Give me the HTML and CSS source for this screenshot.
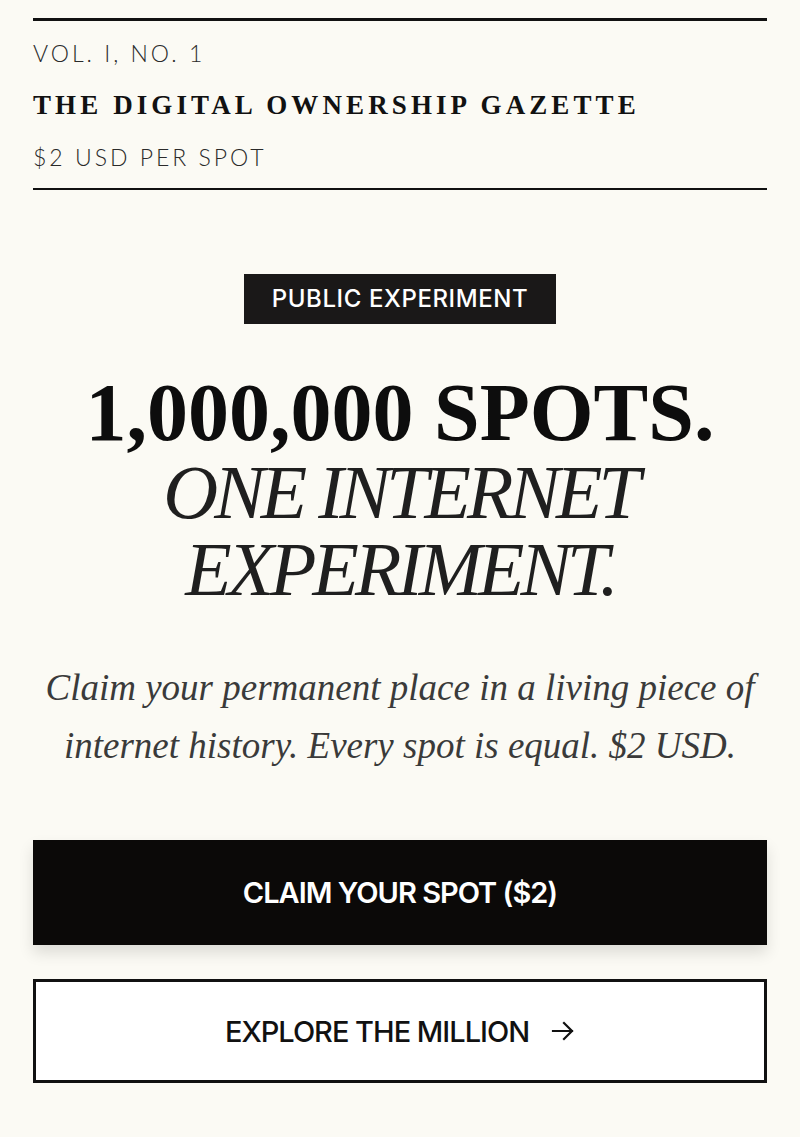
FILE: index.html
```html
<!DOCTYPE html>
<html lang="en">
<head>
<meta charset="utf-8">
<title>The Digital Ownership Gazette</title>
<link rel="stylesheet" href="styles.css">
</head>
<body>
<div class="page">
  <header class="masthead">
    <div class="meta">VOL. I, NO. 1</div>
    <div class="title">THE DIGITAL OWNERSHIP GAZETTE</div>
    <div class="meta">$2 USD PER SPOT</div>
  </header>
  <main class="hero">
    <div class="badge">PUBLIC EXPERIMENT</div>
    <h1 class="headline">
      <span class="line-bold">1,000,000 SPOTS.</span>
      <span class="line-italic">ONE INTERNET</span>
      <span class="line-italic">EXPERIMENT.</span>
    </h1>
    <p class="lede">Claim your permanent place in a living piece of internet history. Every spot is equal. $2 USD.</p>
    <div class="actions">
      <button class="btn btn-primary">CLAIM YOUR SPOT ($2)</button>
      <button class="btn btn-secondary">EXPLORE THE MILLION
        <svg class="arrow" width="24" height="20" viewBox="0 0 24 20" aria-hidden="true"><path d="M2 10H21M13 2L21 10L13 18" fill="none" stroke="#111" stroke-width="2.2" stroke-linecap="square" stroke-linejoin="miter"/></svg>
      </button>
    </div>
  </main>
</div>
</body>
</html>
```

FILE: styles.css
```css
* { box-sizing: border-box; }
html, body { margin: 0; padding: 0; }
body {
  background: #fbfaf4;
  color: #111;
  width: 800px;
  height: 1137px;
  overflow: hidden;
}
.page {
  padding: 18px 33px 0;
}
.masthead {
  border-top: 3px solid #111;
  border-bottom: 2px solid #111;
  padding: 6px 0 5px;
}
.meta {
  font-family: "Lato", sans-serif;
  font-weight: 300;
  font-size: 23px;
  letter-spacing: 3px;
  line-height: 52px;
  color: #2a2a2a;
}
.title {
  font-family: "Liberation Serif", serif;
  font-weight: 700;
  font-size: 27px;
  letter-spacing: 4.1px;
  line-height: 52px;
  color: #111;
}
.hero {
  display: flex;
  flex-direction: column;
  align-items: center;
  text-align: center;
  padding-top: 84px;
}
.badge {
  background: #1a1818;
  color: #fff;
  font-family: "Inter", sans-serif;
  font-weight: 500;
  font-size: 24px;
  letter-spacing: 0.6px;
  line-height: 50px;
  padding: 0 28px;
}
.headline {
  margin: 48px 0 0;
  display: flex;
  flex-direction: column;
  align-items: center;
  font-family: "Liberation Serif", serif;
}
.line-bold {
  font-weight: 700;
  font-size: 82px;
  line-height: 82px;
  letter-spacing: 0;
  color: #0d0d0d;
}
.line-italic {
  font-style: italic;
  font-weight: 400;
  font-size: 76px;
  line-height: 77px;
  letter-spacing: -4px;
  color: #1f1f1f;
}
.lede {
  margin: 51px 0 0;
  font-family: "Liberation Serif", serif;
  font-style: italic;
  font-size: 37px;
  line-height: 58px;
  color: #3a3a3a;
}
.actions {
  width: 100%;
  display: flex;
  flex-direction: column;
  gap: 34px;
  margin-top: 65px;
}
.btn {
  width: 100%;
  height: 105px;
  font-family: "Inter", sans-serif;
  font-weight: 600;
  font-size: 29px;
  letter-spacing: -1px;
  display: flex;
  align-items: center;
  justify-content: center;
  border-radius: 0;
  cursor: pointer;
}
.btn-primary {
  background: #0b0908;
  color: #fff;
  border: none;
  box-shadow: 0 8px 14px rgba(0,0,0,0.12);
}
.btn-secondary {
  background: #fff;
  color: #111;
  border: 3px solid #111;
  height: 104px;
  font-weight: 500;
  gap: 22px;
}
.arrow { display: block; }
```
